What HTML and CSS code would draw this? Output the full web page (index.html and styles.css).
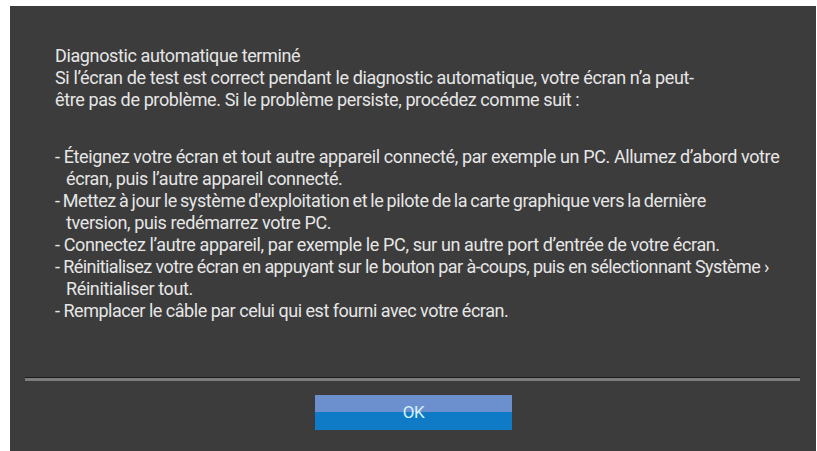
FILE: index.html
```html
<!DOCTYPE html>
<html lang="fr">
<head>
<meta charset="utf-8">
<title>Diagnostic automatique</title>
<link rel="stylesheet" href="styles.css">
</head>
<body>
<div class="panel">
  <div class="content">
    <div class="intro">
      <div class="line">Diagnostic automatique terminé</div>
      <div class="line">Si l’écran de test est correct pendant le diagnostic automatique, votre écran n’a peut-</div>
      <div class="line">être pas de problème. Si le problème persiste, procédez comme suit :</div>
    </div>
    <ul class="steps">
      <li><div class="line">- Éteignez votre écran et tout autre appareil connecté, par exemple un PC. Allumez d’abord votre</div><div class="line cont">écran, puis l’autre appareil connecté.</div></li>
      <li><div class="line tight">- Mettez à jour le système d'exploitation et le pilote de la carte graphique vers la dernière</div><div class="line cont">tversion, puis redémarrez votre PC.</div></li>
      <li><div class="line">- Connectez l’autre appareil, par exemple le PC, sur un autre port d’entrée de votre écran.</div></li>
      <li><div class="line squeeze">- Réinitialisez votre écran en appuyant sur le bouton par à-coups, puis en sélectionnant Système ›</div><div class="line cont">Réinitialiser tout.</div></li>
      <li><div class="line narrow">- Remplacer le câble par celui qui est fourni avec votre écran.</div></li>
    </ul>
  </div>
  <div class="separator"></div>
  <div class="actions">
    <button class="ok">OK</button>
  </div>
</div>
</body>
</html>
```
FILE: styles.css
```css
html, body {
  margin: 0;
  padding: 0;
  background: #ffffff;
}
body {
  width: 817px;
  height: 451px;
  overflow: hidden;
  font-family: Roboto, "Liberation Sans", sans-serif;
}
.panel {
  margin: 6px 0 0 10px;
  width: 806px;
  height: 445px;
  background: #3c3c3c;
  display: flex;
  flex-direction: column;
}
.content {
  padding: 39px 0 0 45px;
  color: #e6e6e6;
  font-size: 18px;
  line-height: 22px;
  letter-spacing: -0.38px;
}
.line {
  white-space: nowrap;
}
.line.tight {
  word-spacing: -1px;
}
.line.squeeze {
  letter-spacing: -0.58px;
}
.line.narrow {
  letter-spacing: -0.48px;
}
.line.cont {
  padding-left: 11px;
}
.steps {
  list-style: none;
  margin: 35px 0 0 0;
  padding: 0;
}
.separator {
  margin: 55px 16px 0 15px;
  height: 3px;
  border-top: 1px solid #1c1c1c;
  background: #7c7c7c;
}
.actions {
  display: flex;
  justify-content: center;
  margin-top: 14px;
}
.ok {
  width: 197px;
  height: 35px;
  border: 0;
  padding: 0;
  margin-left: 1px;
  background: linear-gradient(to bottom, #6b90cd 0, #6b90cd 17px, #0f7bc6 17px, #0f7bc6 100%);
  color: #d6f2ff;
  font-family: Roboto, "Liberation Sans", sans-serif;
  font-size: 17px;
  letter-spacing: -0.5px;
  line-height: 35px;
}
```
